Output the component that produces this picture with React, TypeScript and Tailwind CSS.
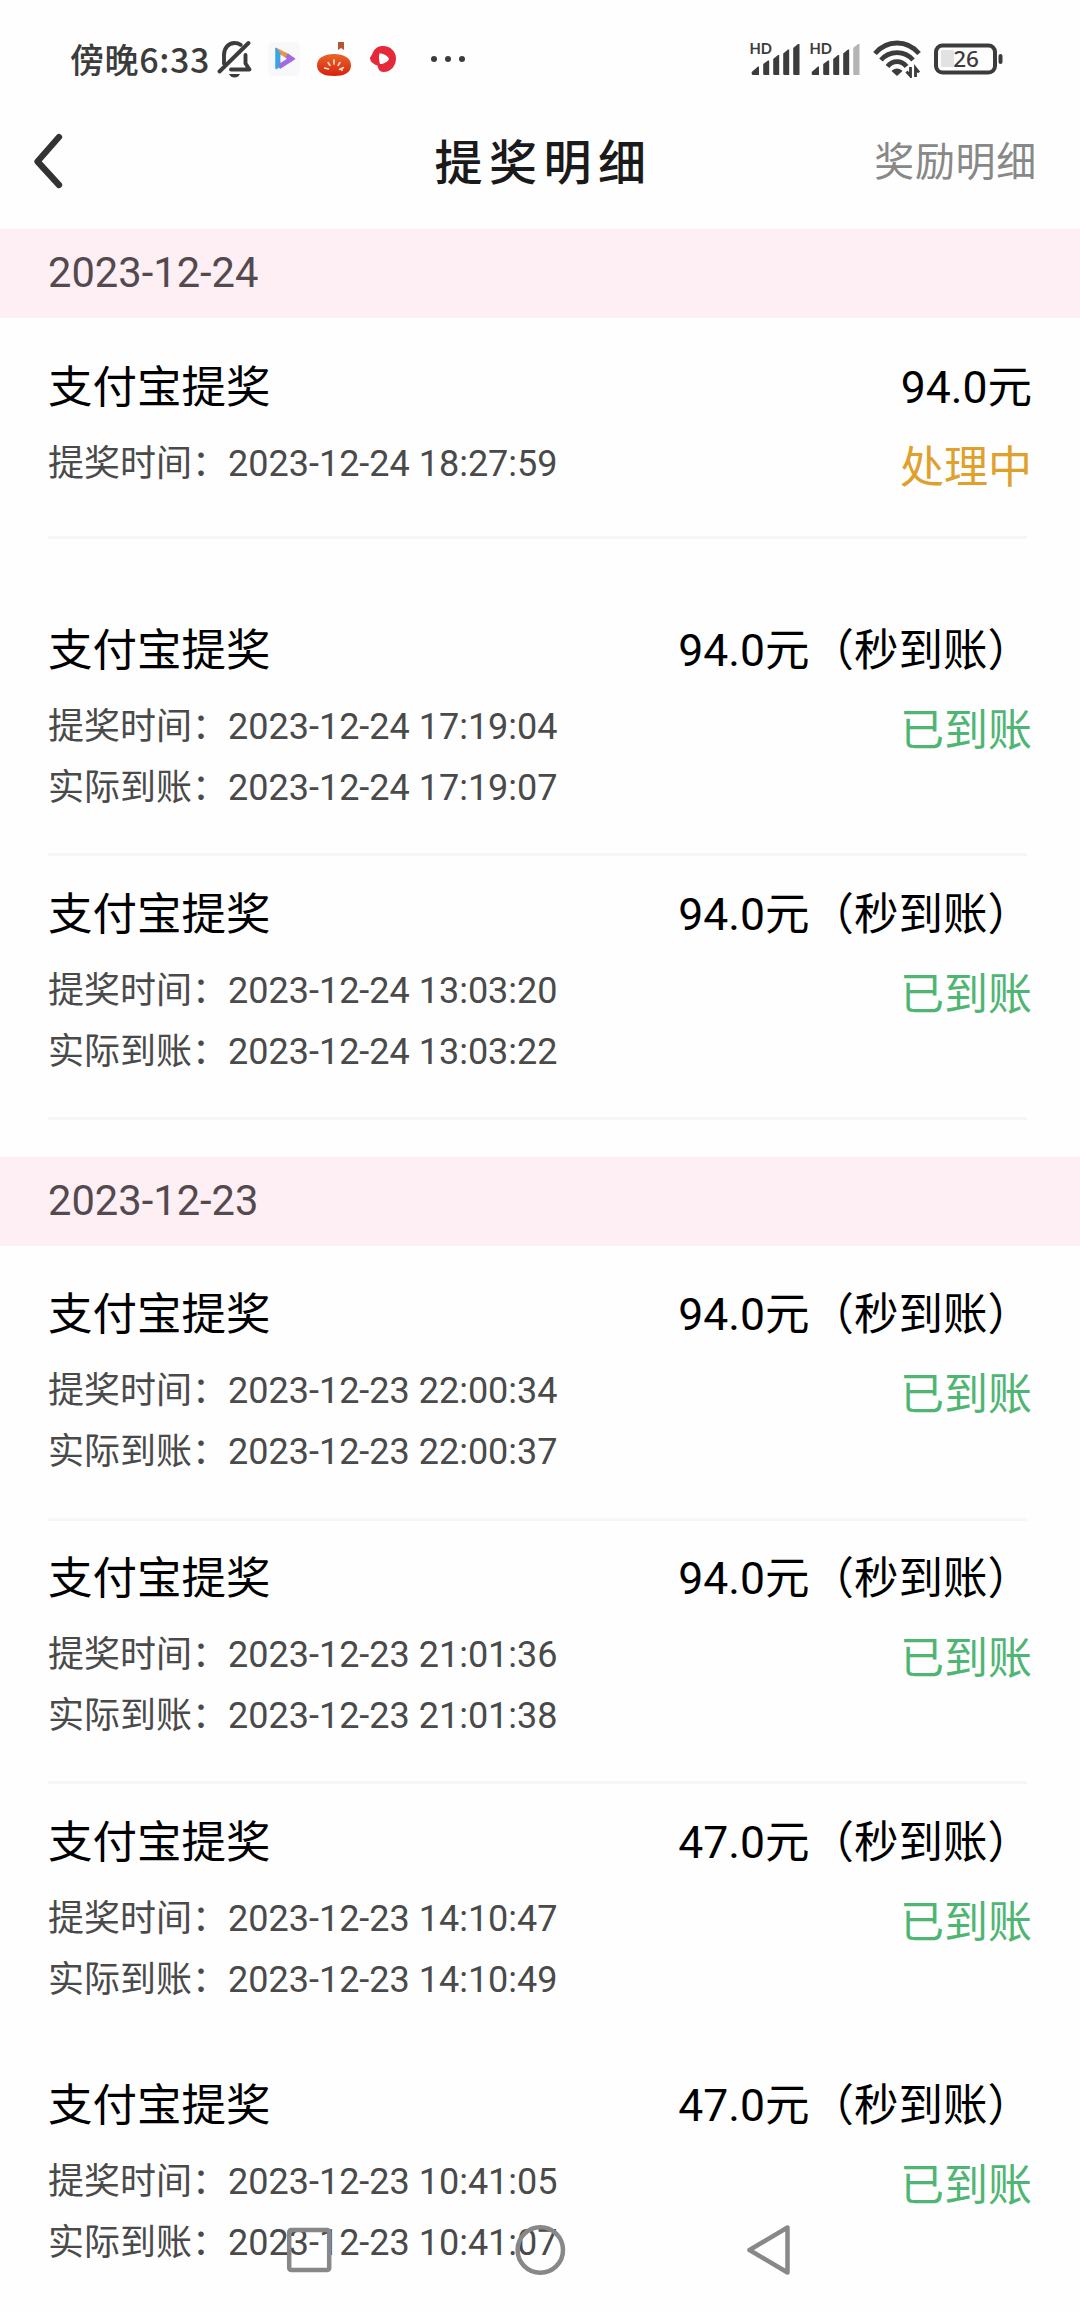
import { clsx } from 'clsx';

type PayoutRecord = {
  title: string;
  amount: string;
  status: 'pending' | 'done';
  requestedAt: string;
  arrivedAt?: string;
  divider?: boolean;
};

type DayGroup = {
  date: string;
  records: PayoutRecord[];
};

const groups: DayGroup[] = [
  {
    date: '2023-12-24',
    records: [
      { title: '支付宝提奖', amount: '94.0元', status: 'pending', requestedAt: '2023-12-24 18:27:59', divider: true },
      { title: '支付宝提奖', amount: '94.0元（秒到账）', status: 'done', requestedAt: '2023-12-24 17:19:04', arrivedAt: '2023-12-24 17:19:07', divider: true },
      { title: '支付宝提奖', amount: '94.0元（秒到账）', status: 'done', requestedAt: '2023-12-24 13:03:20', arrivedAt: '2023-12-24 13:03:22', divider: true },
    ],
  },
  {
    date: '2023-12-23',
    records: [
      { title: '支付宝提奖', amount: '94.0元（秒到账）', status: 'done', requestedAt: '2023-12-23 22:00:34', arrivedAt: '2023-12-23 22:00:37', divider: true },
      { title: '支付宝提奖', amount: '94.0元（秒到账）', status: 'done', requestedAt: '2023-12-23 21:01:36', arrivedAt: '2023-12-23 21:01:38', divider: true },
      { title: '支付宝提奖', amount: '47.0元（秒到账）', status: 'done', requestedAt: '2023-12-23 14:10:47', arrivedAt: '2023-12-23 14:10:49' },
      { title: '支付宝提奖', amount: '47.0元（秒到账）', status: 'done', requestedAt: '2023-12-23 10:41:05', arrivedAt: '2023-12-23 10:41:07' },
    ],
  },
];

function BellOffIcon() {
  return (
    <svg width="36" height="38" viewBox="0 0 36 38" fill="none" stroke="#3c3c3c" strokeWidth="3.9" strokeLinecap="round" strokeLinejoin="round">
      <path d="M2.500 31.500 31.500 3" />
      <path d="M7 23.500V15c0-7 4.500-12 10.500-12 2.600 0 4.500.6 6.200 1.800" />
      <path d="M28.500 15v8.500l4 6H14" />
      <path d="M12 34h11c-1.200 2.400-3 3.500-5.500 3.500S13.200 36.400 12 34Z" fill="#3c3c3c" stroke="none" />
    </svg>
  );
}

function PlayAppIcon() {
  return (
    <svg width="32" height="34" viewBox="0 0 32 34">
      <rect width="32" height="34" rx="6" fill="#f8f7fa" />
      <path d="M8 6.500 L21 13 L17 17 L11 13Z" fill="#e8954a" stroke="#e8954a" strokeWidth="1.500" strokeLinejoin="round" />
      <path d="M8 6.500 V26.500 L12 24 V12Z" fill="#3aa5e6" stroke="#3aa5e6" strokeWidth="1.500" strokeLinejoin="round" />
      <path d="M12 26 L26.500 16.800 L20 12.500 L17.500 16.800 L12 20.500Z" fill="#a06be0" stroke="#a06be0" strokeWidth="1.500" strokeLinejoin="round" />
      <path d="M12.500 12.500 L19 16.800 L12.500 21Z" fill="#f8f7fa" />
    </svg>
  );
}

function TomatoIcon() {
  return (
    <svg width="36" height="36" viewBox="0 0 36 36">
      <defs>
        <linearGradient id="tomato" x1="0" y1="0" x2="0" y2="1">
          <stop offset="0" stopColor="#e8662b" />
          <stop offset="1" stopColor="#d8210f" />
        </linearGradient>
      </defs>
      <path d="M22 1h6v8l-3-2-3 2Z" fill="#b5562e" />
      <path d="M18 13c10 0 17 4 17 11.500S28 35 18 35 1 32 1 24.500 8 13 18 13Z" fill="url(#tomato)" />
      <path d="M18 19v4M12 21.500l2 3M24 21.500l-2 3M8.500 27l4 1M27.500 26.500l-4 2M26 27.500v2" stroke="#ffe9c9" strokeWidth="1.500" strokeLinecap="round" fill="none" />
    </svg>
  );
}

function RedPlayIcon() {
  return (
    <svg width="28" height="28" viewBox="0 0 28 28">
      <path d="M14 1c7.500 0 13 5.500 13 12.500S22 27 14.500 27c-4 0-5.500-3-6-6.500C4 19 1 16.500 1 12.500 4 10 4 1 14 1Z" fill="#e5283a" />
      <path d="M10.500 8.500c3-.5 9 2.500 9.500 5.300-.5 2.700-6 5.700-9 5.200-1-3-1.500-7.500-.5-10.500Z" fill="#fff" />
    </svg>
  );
}

function SignalIcon({ weak = false }: { weak?: boolean }) {
  return (
    <svg width="52" height="50" viewBox="0 -8 52 50" fill="#3c3c3c">
      <text x="-0.500" y="12" fontSize="15.500" fontWeight="700" fontFamily="Lato, sans-serif" textLength="22.500" lengthAdjust="spacingAndGlyphs">HD</text>
      <path d="M1.700 30 L8 24.500 H9 V33 H3 Q1.700 33 1.700 31.500Z" />
      <path d="M13.200 22 L18 18.500 H19.200 V33 H14.500 Q13.200 33 13.200 31.500Z" />
      <path d="M23.200 17 L28 13 H29.200 V33 H24.500 Q23.200 33 23.200 31.500Z" />
      <path d="M33.200 11.500 L38 7.500 H39.200 V33 H34.500 Q33.200 33 33.200 31.500Z" />
      <path d="M43.200 6 L48 2 H49.500 V33 H44.500 Q43.200 33 43.200 31.500Z" fill={weak ? '#b4b4b4' : '#3c3c3c'} />
    </svg>
  );
}

function WifiIcon() {
  return (
    <svg width="48" height="38" viewBox="0 0 48 38" fill="none" stroke="#3c3c3c" strokeWidth="4.800">
      <path d="M2 13.500C14-.5 34-.5 46 13.500" />
      <path d="M8 20c8.500-9.800 23.500-9.800 32 0" />
      <path d="M14.500 26.500c5-6.500 14-6.500 19 0" />
      <path d="M24 36l-5.500-5c2.800-3.500 8.200-3.500 11 0Z" fill="#3c3c3c" stroke="none" />
      <path d="M37.500 27v9l-4-4.500M42.500 37v-9l3.500 4.500" strokeWidth="2.800" />
    </svg>
  );
}

function BatteryIcon() {
  return (
    <svg width="70" height="32" viewBox="0 0 70 32">
      <rect x="7" y="7" width="13" height="17" rx="1" fill="#e2e2e2" />
      <rect x="2" y="2.500" width="59" height="27" rx="6.500" fill="none" stroke="#3c3c3c" strokeWidth="4" />
      <rect x="64.500" y="11" width="4" height="10" rx="2" fill="#3c3c3c" />
      <text x="32" y="24.200" fontSize="22.500" fontWeight="500" fontFamily="'Noto Sans', sans-serif" textAnchor="middle" fill="#3c3c3c">26</text>
    </svg>
  );
}

function StatusBar() {
  return (
    <div className="flex h-[118px] items-center pl-[70px] pr-[76px] font-['Noto_Sans_CJK_SC',sans-serif] text-[#3c3c3c]">
      <span className="w-[147px] whitespace-nowrap text-[34px] font-medium leading-[44px] tracking-[0.600px]">傍晚6:33</span>
      <BellOffIcon />
      <div className="ml-[15px]"><PlayAppIcon /></div>
      <div className="ml-[16px]"><TomatoIcon /></div>
      <div className="ml-[17px]"><RedPlayIcon /></div>
      <div className="ml-[34px] flex gap-2">
        <i className="size-1.5 rounded-full bg-[#3c3c3c]" />
        <i className="size-1.5 rounded-full bg-[#3c3c3c]" />
        <i className="size-1.5 rounded-full bg-[#3c3c3c]" />
      </div>
      <div className="ml-auto flex items-center">
        <SignalIcon />
        <div className="ml-2"><SignalIcon weak /></div>
        <div className="ml-[11px]"><WifiIcon /></div>
        <div className="ml-[13px]"><BatteryIcon /></div>
      </div>
    </div>
  );
}

function TitleBar() {
  return (
    <header className="grid h-[111px] grid-cols-3 items-start pl-[32px] pr-[43px]">
      <button className="mt-[15px] w-fit">
        <svg width="32" height="56" viewBox="0 0 32 56" fill="none" stroke="#333" strokeWidth="6.300" strokeLinecap="round" strokeLinejoin="round">
          <path d="M27 4 5.500 28.500 27 52" />
        </svg>
      </button>
      <h1 className="ml-[18px] mt-[11px] whitespace-nowrap text-center text-[48px] font-medium leading-[70px] tracking-[6.500px] text-[#1a1a1a]">提奖明细</h1>
      <a className="mt-[15px] whitespace-nowrap text-right text-[40px] leading-[60px] tracking-[0.700px] text-[#888]">奖励明细</a>
    </header>
  );
}

function RecordRow({ record }: { record: PayoutRecord }) {
  const done = record.status === 'done';
  return (
    <li className="h-[263.670px]">
      <div className={clsx('flex justify-between pt-[28.500px]', done ? 'h-[263.670px]' : 'h-[210px]', record.divider && 'border-b-3 border-[#f6f6f6]')}>
        <div>
          <h2 className="text-[44.500px] leading-[60px] text-black">{record.title}</h2>
          <div className="mt-[16px] text-[36px] leading-[61px] text-[#4a4a4a]">
            <p>提奖时间：{record.requestedAt}</p>
            {record.arrivedAt && <p>实际到账：{record.arrivedAt}</p>}
          </div>
        </div>
        <div className="-mr-[5px] text-right">
          <p className="text-[44.500px] leading-[60px] text-black">{record.amount}</p>
          <p className={clsx('mt-[20px] text-[44px] leading-[60px]', done ? 'text-[#4fb572]' : 'text-[#e0a02c]')}>
            {done ? '已到账' : '处理中'}
          </p>
        </div>
      </div>
    </li>
  );
}

function NavBar() {
  return (
    <nav className="absolute bottom-0 left-0 h-[124px] w-full">
      <svg width="1080" height="124" viewBox="0 0 1080 124" fill="none" stroke="#888" strokeWidth="4.500" strokeLinejoin="round">
        <rect x="289.200" y="42" width="40" height="40" rx="2" />
        <circle cx="540.300" cy="62" r="22.700" />
        <path d="M787.500 39.500v45L749.500 62Z" />
      </svg>
    </nav>
  );
}

export default function App() {
  return (
    <div className="relative h-[2312px] w-[1080px] overflow-hidden bg-[#fefefe] font-[Roboto,'Noto_Sans_CJK_SC',sans-serif]">
      <StatusBar />
      <TitleBar />
      {groups.map((group) => (
        <section key={group.date} className="mb-[37px]">
          <div className="h-[89px] bg-[#feeff5] pl-[48px] text-[41.700px] leading-[87px] text-[#544a4e]">{group.date}</div>
          <ul className="pl-[48px] pr-[53px] pt-[11px]">
            {group.records.map((record) => (
              <RecordRow key={record.requestedAt} record={record} />
            ))}
          </ul>
        </section>
      ))}
      <NavBar />
    </div>
  );
}
